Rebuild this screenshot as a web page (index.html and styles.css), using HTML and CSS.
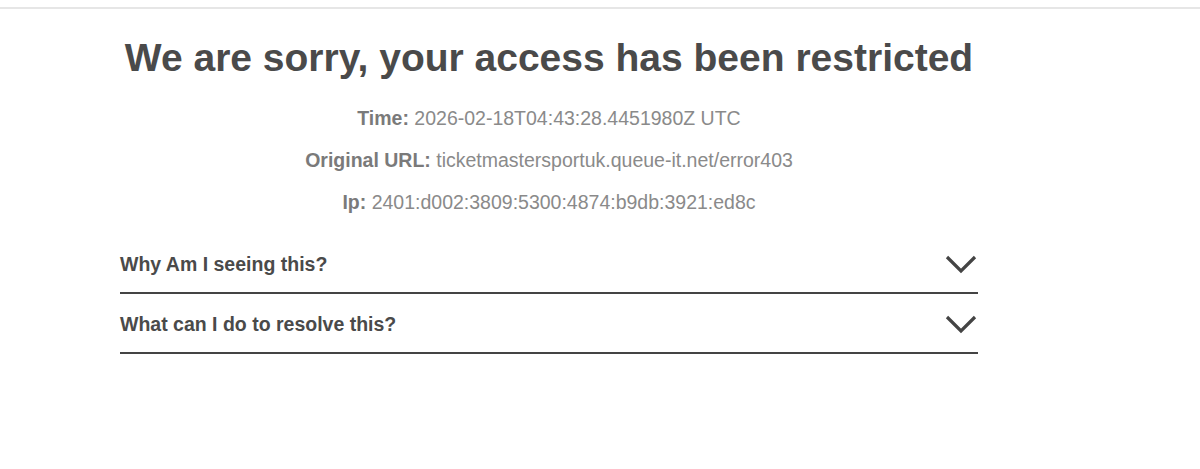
FILE: index.html
```html
<!DOCTYPE html>
<html>
<head>
<meta charset="utf-8">
<link rel="stylesheet" href="styles.css">
</head>
<body>
<div class="topbar"></div>
<main class="content">
  <h1 class="title">We are sorry, your access has been restricted</h1>
  <div class="info">
    <p class="info-line"><b>Time:</b> 2026-02-18T04:43:28.4451980Z UTC</p>
    <p class="info-line"><b>Original URL:</b> ticketmastersportuk.queue-it.net/error403</p>
    <p class="info-line"><b>Ip:</b> 2401:d002:3809:5300:4874:b9db:3921:ed8c</p>
  </div>
  <div class="accordion">
    <div class="acc-item">
      <span class="acc-title">Why Am I seeing this?</span>
      <svg class="chev" width="32" height="20" viewBox="0 0 32 20"><polyline points="2,3 16,17 30,3" fill="none" stroke="#444" stroke-width="3.2"/></svg>
    </div>
    <div class="acc-item">
      <span class="acc-title">What can I do to resolve this?</span>
      <svg class="chev" width="32" height="20" viewBox="0 0 32 20"><polyline points="2,3 16,17 30,3" fill="none" stroke="#444" stroke-width="3.2"/></svg>
    </div>
  </div>
</main>
</body>
</html>
```

FILE: styles.css
```css
html, body {
  margin: 0;
  padding: 0;
  background: #fff;
  font-family: "Liberation Sans", Arial, sans-serif;
}
.topbar {
  height: 2px;
  margin-top: 7px;
  background: #e6e6e6;
}
.content {
  width: 858px;
  margin-left: 120px;
  padding-top: 27px;
}
.title {
  margin: 0;
  text-align: center;
  font-size: 39px;
  line-height: 44px;
  font-weight: bold;
  color: #4a4a4a;
}
.info {
  margin-top: 27px;
  display: flex;
  flex-direction: column;
  gap: 19px;
}
.info-line {
  margin: 0;
  text-align: center;
  font-size: 19.5px;
  line-height: 23px;
  color: #8a8a8a;
}
.info-line b {
  color: #7a7a7a;
}
.accordion {
  margin-top: 20px;
}
.acc-item {
  display: flex;
  justify-content: space-between;
  align-items: center;
  height: 60px;
  padding-top: 2px;
  border-bottom: 2px solid #444;
  box-sizing: border-box;
}
.acc-title {
  font-size: 19.5px;
  font-weight: bold;
  color: #4a4a4a;
}
.chev {
  margin-right: 1px;
}
```
